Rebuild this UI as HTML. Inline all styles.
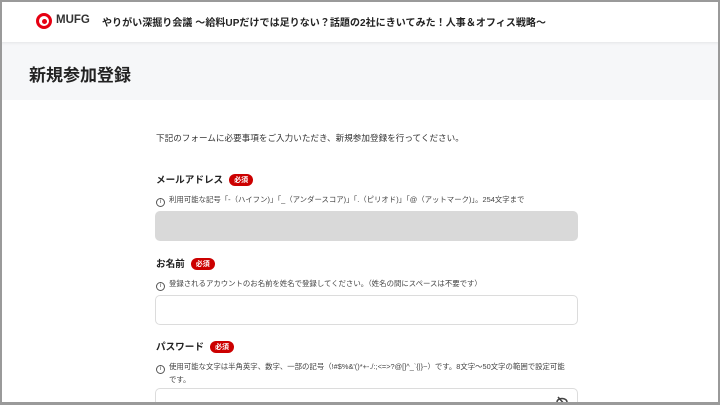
<!DOCTYPE html>
<html><head><meta charset="utf-8"><style>
*{margin:0;padding:0;box-sizing:border-box}
html,body{width:720px;height:405px;overflow:hidden;background:#fff}
body{font-family:"Liberation Sans","Noto Sans CJK JP",sans-serif;color:#222;position:relative}
.frame{position:absolute;inset:0;border:2px solid #9a9a9a;border-bottom-width:3px;pointer-events:none;z-index:10}
.hdr{position:absolute;left:0;top:0;width:720px;height:42px;background:#fff;box-shadow:0 1px 3px rgba(0,0,0,.08);z-index:2}
.logo{position:absolute;left:36px;top:13px;width:16px;height:16px;border-radius:50%;border:3px solid #e60012}
.logo:after{content:"";position:absolute;left:2.5px;top:2.5px;width:5px;height:5px;border-radius:50%;background:#e60012}
.mufg{position:absolute;left:56px;top:14px;font-size:11.5px;font-weight:bold;color:#333;font-family:"Liberation Sans",sans-serif}
.ttl{position:absolute;left:102px;top:14px;font-size:10px;font-weight:bold;color:#222;white-space:nowrap;letter-spacing:.05px}
.band{position:absolute;left:0;top:42px;width:720px;height:58px;background:#f6f7f9}
.band h1{position:absolute;left:29px;top:19px;font-size:17px;font-weight:bold;color:#222}
.t{position:absolute;white-space:nowrap}
.intro{left:156px;top:132px;font-size:8.6px;color:#333}
.lbl{font-size:9.6px;font-weight:bold;color:#222}
.req{display:inline-block;background:#c00;color:#fff;font-size:7px;font-weight:bold;border-radius:7px;padding:1px 5px;margin-left:6px;vertical-align:1px}
.hint{font-size:7.4px;color:#444}
.hint i{font-style:normal;display:inline-block;width:9px;height:9px;border:1px solid #555;border-radius:50%;font-size:6px;text-align:center;line-height:7px;margin-right:4px;vertical-align:-1px}
.inp{position:absolute;left:155px;width:423px;height:30px;border-radius:5px}
</style></head><body>
<div class="hdr"><div class="logo"></div><div class="mufg">MUFG</div>
<div class="ttl">やりがい深掘り会議 〜給料UPだけでは足りない？話題の2社にきいてみた！人事＆オフィス戦略〜</div></div>
<div class="band"><h1>新規参加登録</h1></div>
<div class="t intro">下記のフォームに必要事項をご入力いただき、新規参加登録を行ってください。</div>

<div class="t lbl" style="left:156px;top:172px">メールアドレス<span class="req">必須</span></div>
<div class="t hint" style="left:156px;top:194px"><i>i</i>利用可能な記号「-（ハイフン)」「_（アンダースコア)」「.（ピリオド)」「@（アットマーク)」。254文字まで</div>
<div class="inp" style="top:211px;background:#d9d9d9"></div>

<div class="t lbl" style="left:156px;top:256px">お名前<span class="req">必須</span></div>
<div class="t hint" style="left:156px;top:278px"><i>i</i>登録されるアカウントのお名前を姓名で登録してください。（姓名の間にスペースは不要です）</div>
<div class="inp" style="top:295px;border:1px solid #dcdcdc"></div>

<div class="t lbl" style="left:156px;top:339px">パスワード<span class="req">必須</span></div>
<div class="t hint" style="left:156px;top:361px;line-height:12px"><i>i</i>使用可能な文字は半角英字、数字、一部の記号（!#$%&'()*+-./:;<=>?@[]^_`{|}~）です。8文字〜50文字の範囲で設定可能<br><span style="padding-left:13px">です。</span></div>
<div class="inp" style="top:388px;border:1px solid #dcdcdc"></div>
<svg style="position:absolute;left:555px;top:396px" width="14" height="10" viewBox="0 0 14 10"><ellipse cx="7" cy="6" rx="5" ry="3.5" fill="none" stroke="#444" stroke-width="1.5"/><line x1="3" y1="1" x2="11" y2="10" stroke="#444" stroke-width="1.5"/></svg>
<div class="frame"></div>
</body></html>
